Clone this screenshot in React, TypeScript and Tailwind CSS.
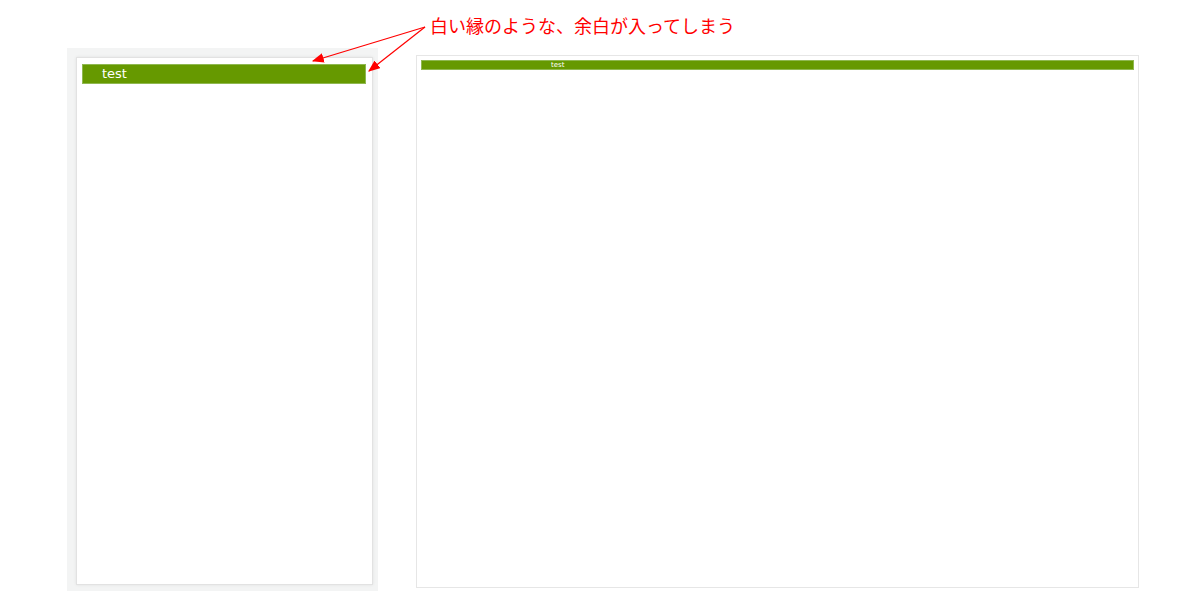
export default function App() {
  return (
    <div className="relative w-[1200px] h-[600px] bg-white font-['DejaVu_Sans',sans-serif]">
      {/* 注釈 */}
      <div className="absolute left-[430px] top-[13px] text-[18px] leading-[24px] text-[#ff0000] font-['Noto_Sans_CJK_JP',sans-serif]">
        白い縁のような、余白が入ってしまう
      </div>
      <svg className="absolute left-0 top-0 pointer-events-none" width="1200" height="600">
        <defs>
          <marker id="arrow" markerWidth="10" markerHeight="8" refX="9" refY="4" orient="auto">
            <path d="M0,0 L10,4 L0,8 z" fill="#ff0000" />
          </marker>
        </defs>
        <line x1="425" y1="27" x2="313" y2="61" stroke="#ff0000" strokeWidth="1.2" markerEnd="url(#arrow)" />
        <line x1="425" y1="27" x2="369" y2="71" stroke="#ff0000" strokeWidth="1.2" markerEnd="url(#arrow)" />
      </svg>

      <div className="flex items-start pt-[48px] pl-[67px] gap-[38px]">
        {/* 左パネル */}
        <div className="w-[311px] h-[543px] bg-[#f3f4f4] pl-[9px] pt-[9px] pr-[5px] pb-[6px]">
          <div className="h-full bg-white border border-[#e2e2e2] shadow-[0_0_3px_rgba(0,0,0,0.08)] pl-[5px] pr-[6px] pt-[6px]">
            <div className="h-[20px] bg-[#669900] border border-[#8fb850] pl-[19px] text-[13px] leading-[18px] text-white">
              test
            </div>
          </div>
        </div>

        {/* 右パネル */}
        <div className="mt-[7px] w-[723px] h-[533px] bg-white border border-[#e6e6e6] px-[4px] pt-[4px]">
          <div className="h-[10px] bg-[#669900] border border-[#8fb850] pl-[129px] text-[7px] leading-[8px] text-white">
            test
          </div>
        </div>
      </div>
    </div>
  );
}
